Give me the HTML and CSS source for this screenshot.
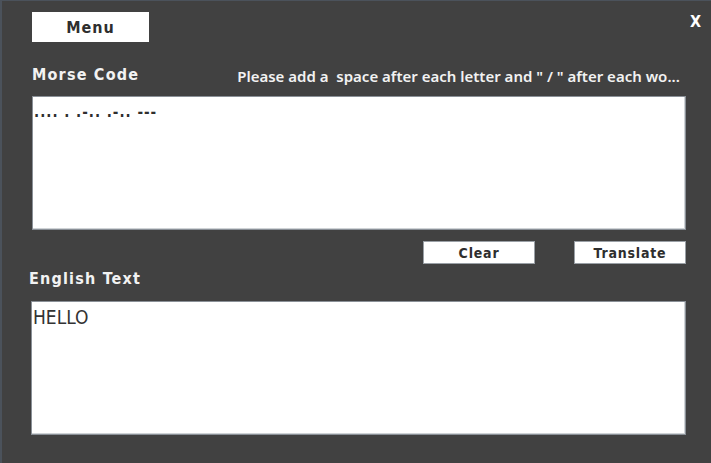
FILE: index.html
```html
<!DOCTYPE html>
<html>
<head>
<meta charset="utf-8">
<link rel="stylesheet" href="styles.css">
</head>
<body>
<div class="app">
  <div class="top">
    <div class="menu-btn">Menu</div>
    <div class="close">X</div>
  </div>
  <div class="morse-head">
    <div class="label">Morse Code</div>
    <div class="hint">Please add a&nbsp; space after each letter and " / " after each wo...</div>
  </div>
  <div class="box box-morse"><span class="morse">.... . .-.. .-.. ---</span></div>
  <div class="actions">
    <div class="btn">Clear</div>
    <div class="btn">Translate</div>
  </div>
  <div class="label label-eng">English Text</div>
  <div class="box box-eng"><span class="eng">HELLO</span></div>
</div>
</body>
</html>
```
FILE: styles.css
```css
html, body {
  margin: 0;
  padding: 0;
}
body {
  width: 711px;
  height: 463px;
  background: #414141;
  overflow: hidden;
  font-family: "DejaVu Sans Condensed", "DejaVu Sans", sans-serif;
}
.app {
  box-sizing: border-box;
  width: 711px;
  height: 463px;
  border-left: 2px solid #4b525b;
  border-top: 1px solid #4b525b;
  padding: 11px 0 0 30px;
  display: flex;
  flex-direction: column;
}
.top {
  display: flex;
  justify-content: space-between;
  align-items: flex-start;
  height: 30px;
}
.menu-btn {
  width: 117px;
  height: 30px;
  background: #ffffff;
  color: #2e2e2e;
  font-weight: bold;
  font-size: 16px;
  letter-spacing: 1px;
  display: flex;
  align-items: center;
  justify-content: center;
}
.close {
  color: #ffffff;
  font-weight: bold;
  font-size: 16px;
  margin-right: 10px;
}
.morse-head {
  display: flex;
  align-items: flex-start;
  margin-top: 23px;
  height: 31px;
}
.label {
  color: #f2f2f2;
  font-weight: bold;
  font-size: 16px;
  letter-spacing: 1.2px;
}
.hint {
  color: #f2f2f2;
  font-family: "Noto Sans", sans-serif;
  font-size: 15px;
  font-weight: 600;
  letter-spacing: 0;
  margin-left: 98px;
  margin-top: 1px;
  white-space: nowrap;
}
.box {
  box-sizing: border-box;
  width: 654px;
  height: 134px;
  background: #ffffff;
  border: 1px solid #8a9097;
  box-shadow: inset -1px -1px 0 #cfd3d6;
}
.morse {
  display: block;
  color: #2e2e2e;
  font-size: 15px;
  font-weight: bold;
  padding: 6px 0 0 1px;
  letter-spacing: 1px;
}
.actions {
  display: flex;
  justify-content: flex-end;
  gap: 39px;
  margin-top: 11px;
  width: 654px;
}
.btn {
  box-sizing: border-box;
  width: 112px;
  height: 23px;
  background: #ffffff;
  border: 1px solid #9aa0a6;
  color: #2e2e2e;
  font-weight: bold;
  font-size: 14px;
  letter-spacing: 0.8px;
  display: flex;
  align-items: center;
  justify-content: center;
}
.label-eng {
  margin-left: -3px;
  margin-top: 5px;
  height: 32px;
}
.box-eng {
  margin-left: -1px;
  width: 655px;
}
.eng {
  display: block;
  color: #333333;
  font-size: 19px;
  padding: 4px 0 0 1px;
}
```
